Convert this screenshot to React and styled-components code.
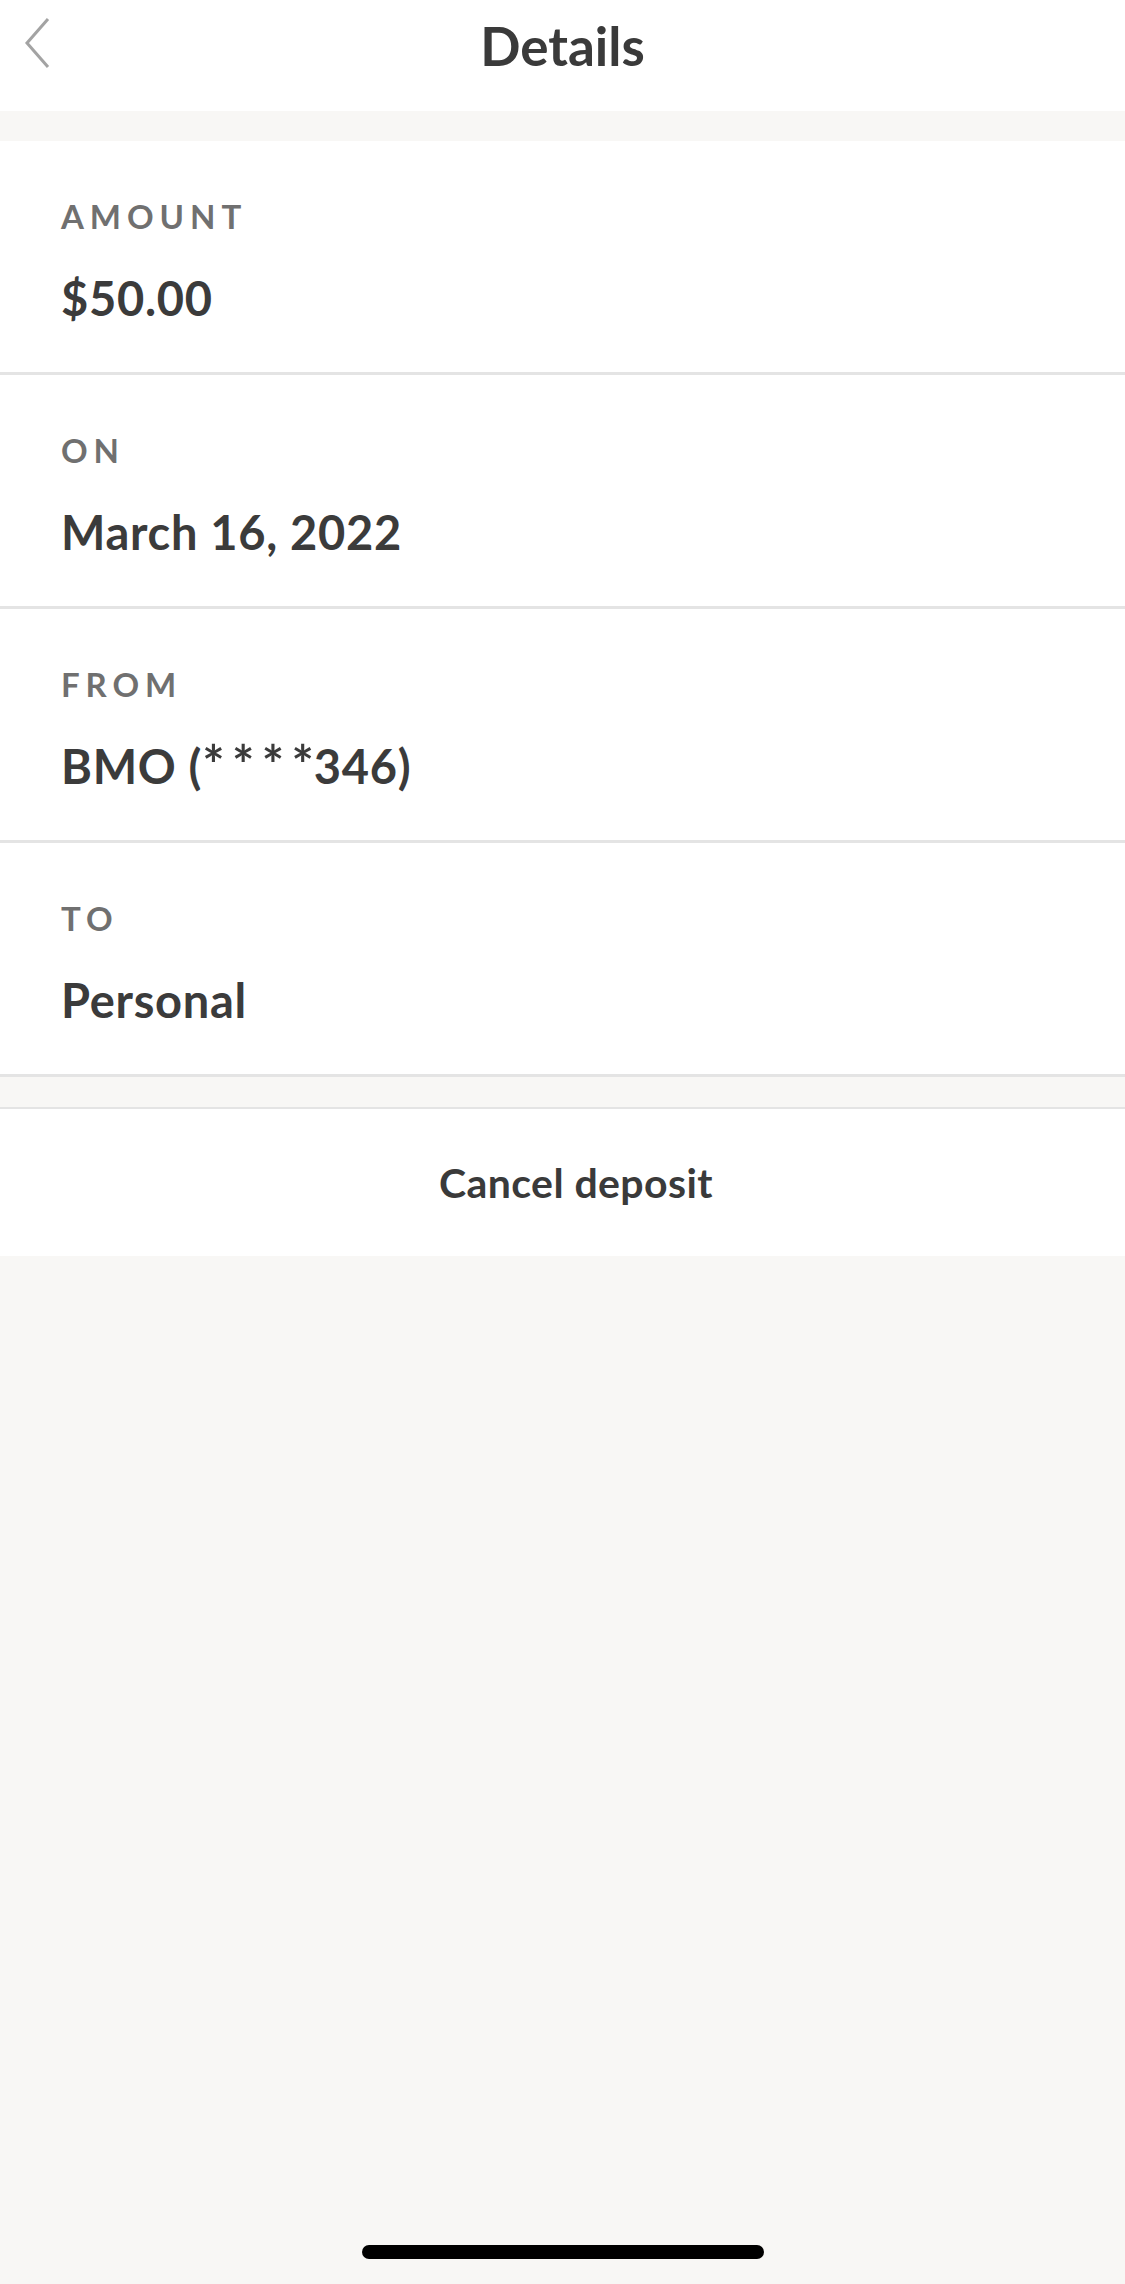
import React from 'react'
import styled, { createGlobalStyle } from 'styled-components'

const GlobalStyle = createGlobalStyle`
  html, body {
    margin: 0;
    padding: 0;
    background: #f8f7f5;
  }
  body {
    font-family: Lato, "Open Sans", sans-serif;
    -webkit-font-smoothing: antialiased;
  }
`

const Page = styled.div`
  min-height: 2284px;
  display: flex;
  flex-direction: column;
  background: #f8f7f5;
`

const Header = styled.header`
  height: 111px;
  background: #ffffff;
  display: grid;
  grid-template-columns: 1fr auto 1fr;
  align-items: start;
  padding-top: 14px;
  box-sizing: border-box;
`

const BackButton = styled.button`
  justify-self: start;
  border: 0;
  background: none;
  padding: 3px 0 0 24px;
  cursor: pointer;
  display: flex;
`

const Title = styled.h1`
  margin: 0;
  font-size: 53px;
  line-height: 64px;
  font-weight: 700;
  color: #3a3a3a;
`

const Card = styled.section`
  margin-top: ${({ $gap }) => $gap}px;
  background: #ffffff;
  display: flex;
  flex-direction: column;
  border-top: ${({ $topBorder }) => ($topBorder ? '2px solid #e4e4e4' : 'none')};
`

const Row = styled.div`
  padding: 59px 61px 50px;
  display: flex;
  flex-direction: column;
  gap: 42px;
  border-bottom: 3px solid #e4e4e4;
`

const Label = styled.div`
  font-size: 33px;
  line-height: 1;
  font-weight: 700;
  letter-spacing: 0.18em;
  color: #707070;
`

const Value = styled.div`
  font-size: 47px;
  line-height: 1;
  font-weight: 700;
  letter-spacing: 0.015em;
  color: #3b3b3b;
`

const Mask = styled.span`
  font-size: 1.12em;
  line-height: 0;
  letter-spacing: 0.14em;
  margin-right: -0.14em;
`

const CancelButton = styled.button`
  height: 147px;
  border: 0;
  background: #ffffff;
  font-family: inherit;
  font-size: 41px;
  font-weight: 700;
  letter-spacing: 0.01em;
  color: #3a3a3a;
  cursor: pointer;
  padding: 0 0 0 27px;
`

const Spacer = styled.div`
  flex: 1;
`

const HomeIndicator = styled.div`
  align-self: center;
  width: 402px;
  height: 14px;
  border-radius: 7px;
  background: #000000;
  margin-bottom: 25px;
`

const details = [
  { label: 'AMOUNT', value: '$50.00' },
  { label: 'ON', value: 'March 16, 2022' },
  {
    label: 'FROM',
    value: (
      <>
        BMO (<Mask>****</Mask>346)
      </>
    ),
  },
  { label: 'TO', value: 'Personal' },
]

const Chevron = () => (
  <svg width="28" height="52" viewBox="0 0 28 52" fill="none">
    <path d="M24 2 L3 26 L24 50" stroke="#a3a3a3" strokeWidth="3" />
  </svg>
)

const App = () => (
  <Page>
    <GlobalStyle />
    <Header>
      <BackButton aria-label="Back">
        <Chevron />
      </BackButton>
      <Title>Details</Title>
      <span />
    </Header>
    <Card $gap={30}>
      {details.map(({ label, value }) => (
        <Row key={label}>
          <Label>{label}</Label>
          <Value>{value}</Value>
        </Row>
      ))}
    </Card>
    <Card $gap={30} $topBorder>
      <CancelButton>Cancel deposit</CancelButton>
    </Card>
    <Spacer />
    <HomeIndicator />
  </Page>
)

export default App
